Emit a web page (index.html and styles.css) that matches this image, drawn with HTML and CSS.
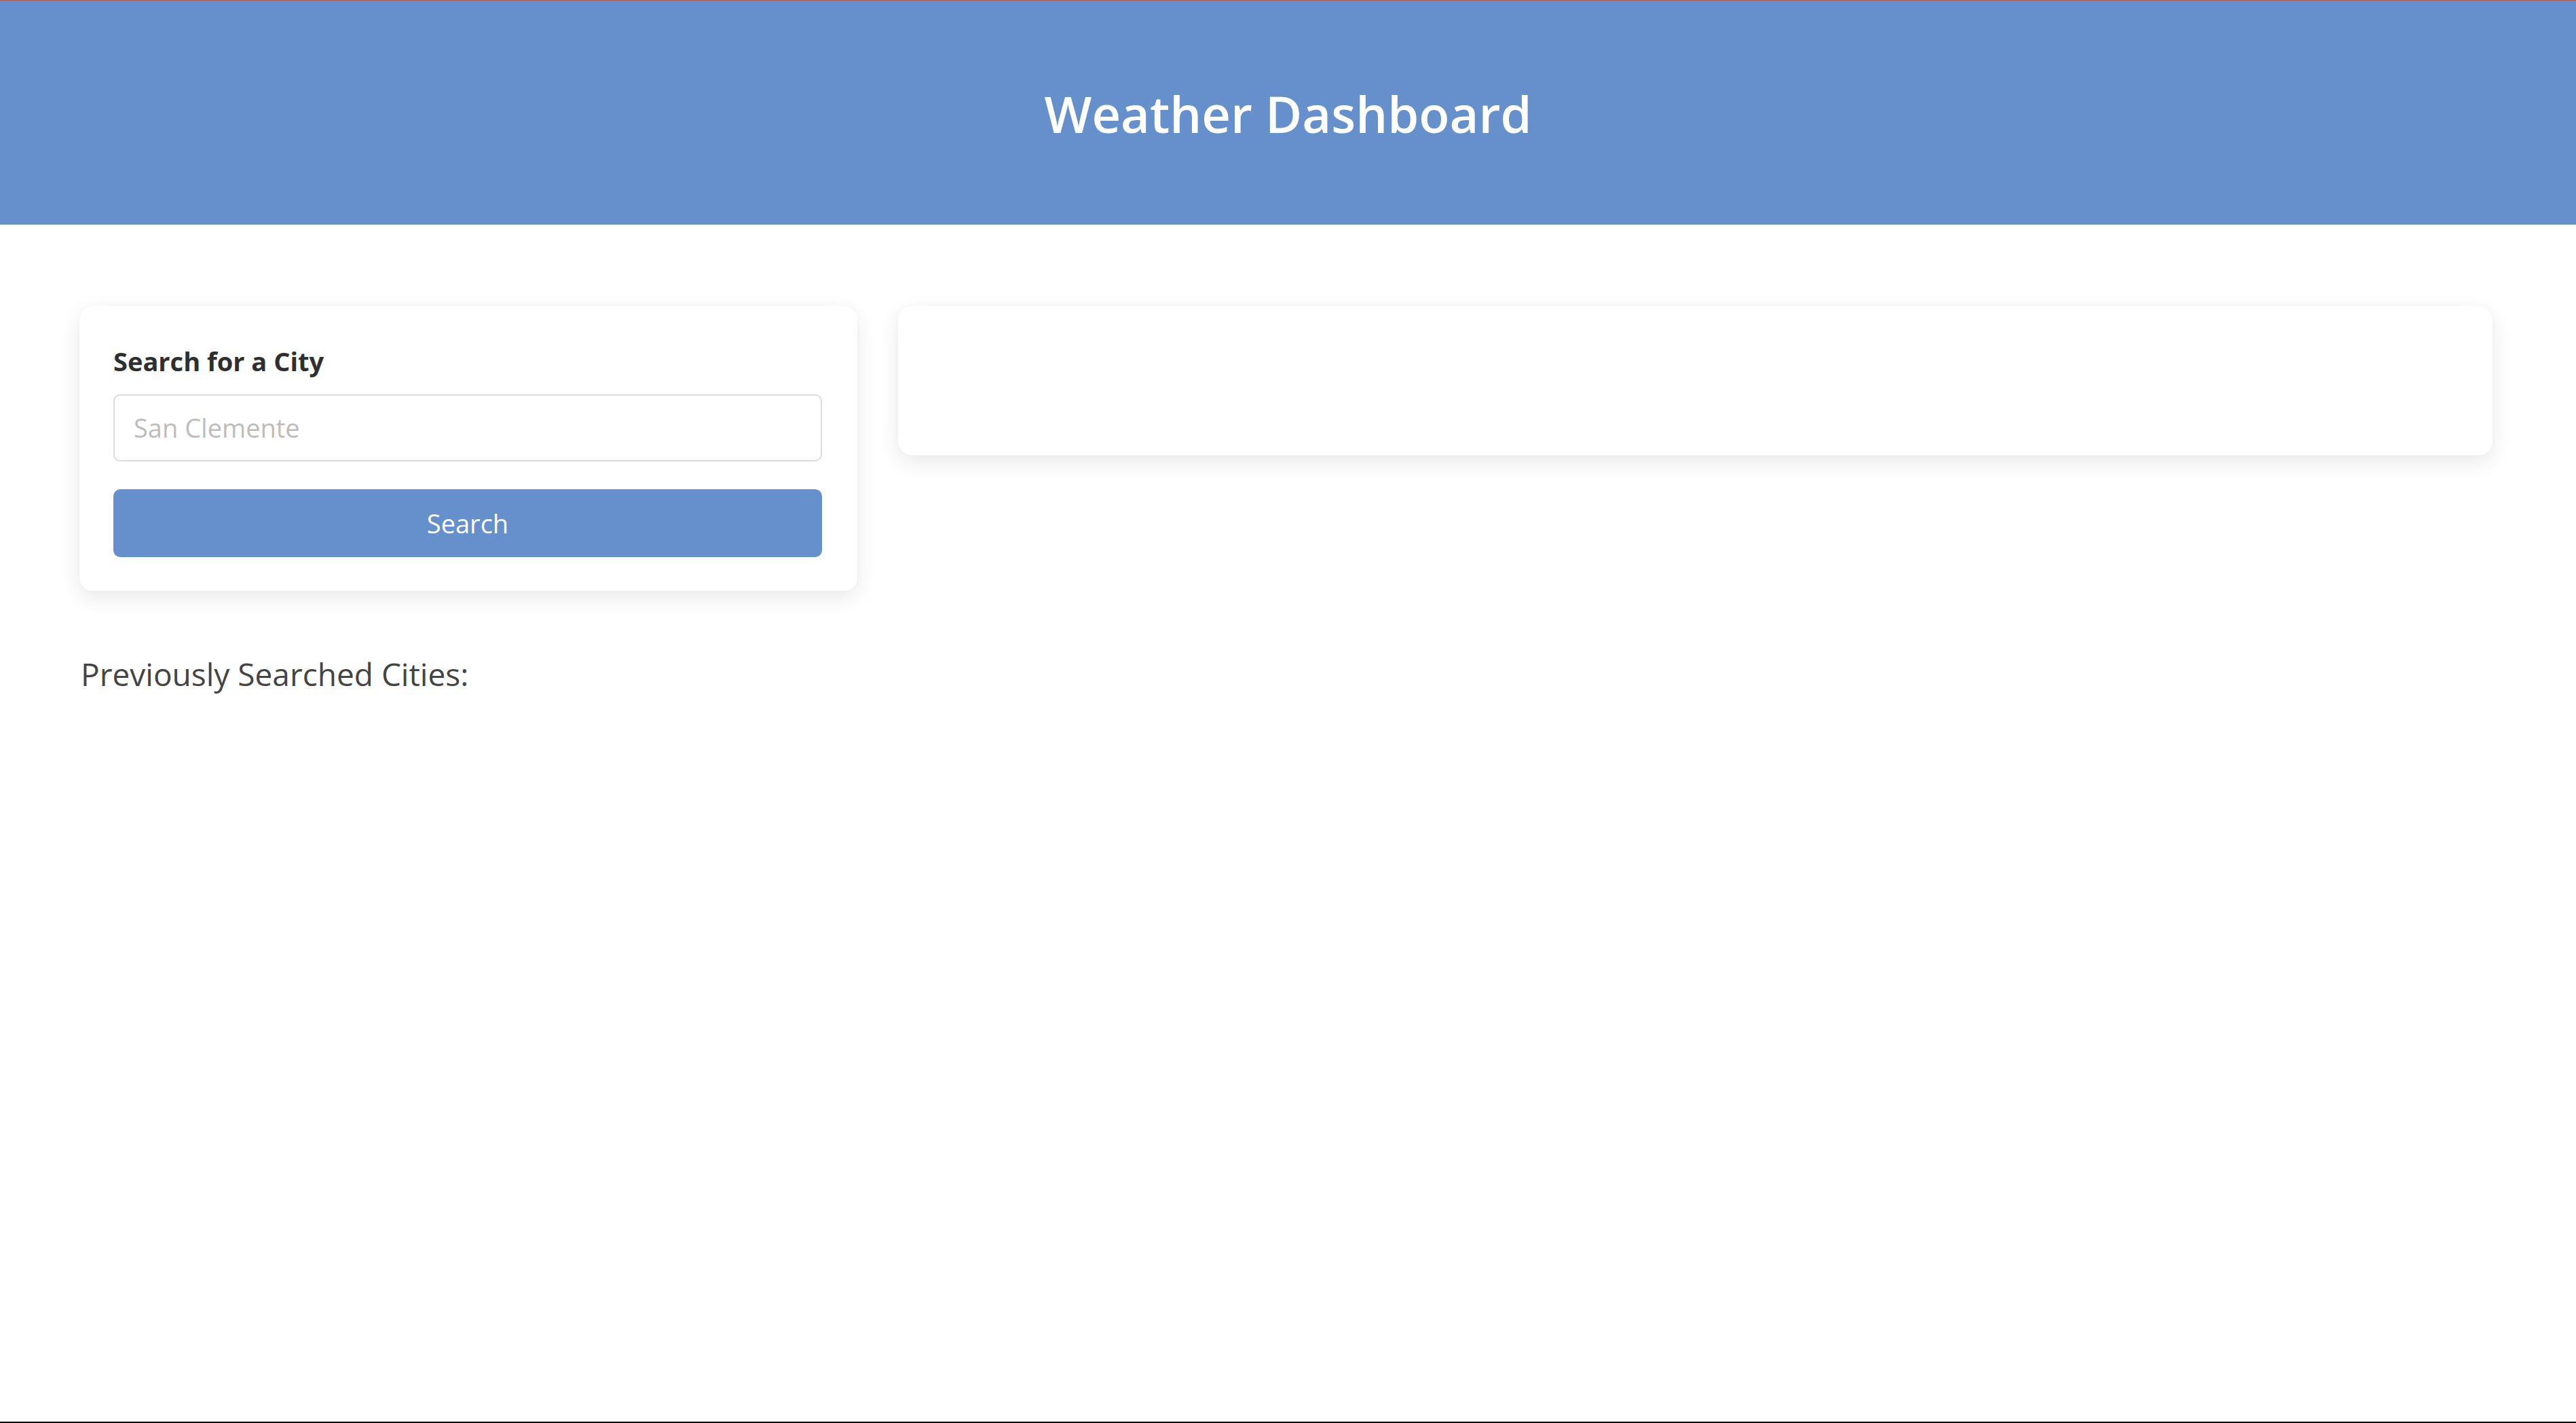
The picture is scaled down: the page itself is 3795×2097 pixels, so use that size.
FILE: index.html
```html
<!DOCTYPE html>
<html lang="en">
<head>
<meta charset="utf-8">
<title>Weather Dashboard</title>
<link rel="stylesheet" href="styles.css">
</head>
<body>
<header class="site-header">
  <h1 class="site-title">Weather Dashboard</h1>
</header>
<main class="layout">
  <section class="sidebar">
    <div class="card search-card">
      <h2 class="search-title">Search for a City</h2>
      <input class="search-input" type="text" placeholder="San Clemente">
      <button class="search-button" type="button">Search</button>
    </div>
    <p class="history-title">Previously Searched Cities:</p>
  </section>
  <section class="card weather-card"></section>
</main>
</body>
</html>
```

FILE: styles.css
```css
* { box-sizing: border-box; }

html, body { margin: 0; padding: 0; }

body {
  min-height: 100vh;
  font-family: "Open Sans", "Noto Sans", sans-serif;
  background: #ffffff;
  color: #333333;
  border-bottom: 2px solid #000000;
}

.site-header {
  height: 331px;
  background: #6590cc;
  border-top: 1px solid #b4595c;
  display: flex;
  align-items: center;
  justify-content: center;
}

.site-title {
  margin: 0;
  color: #ffffff;
  font-size: 74px;
  font-weight: 600;
  line-height: 1.2;
  padding-top: 4px;
}

.layout {
  display: grid;
  grid-template-columns: 1146px 1fr;
  column-gap: 60px;
  align-items: start;
  padding: 120px 123px 0 117px;
}

.card {
  background: #ffffff;
  border-radius: 20px;
  box-shadow: 0 10px 32px rgba(0, 0, 0, 0.09), 0 0 4px rgba(0, 0, 0, 0.03);
}

.search-card {
  display: flex;
  flex-direction: column;
  padding: 58px 52px 50px 50px;
}

.search-title {
  margin: 0 0 24px 0;
  font-size: 38px;
  font-weight: 700;
  line-height: 1.25;
  color: #2f2f2f;
}

.search-input {
  height: 99px;
  width: 100%;
  border: 2px solid #dcdcdc;
  border-radius: 10px;
  padding: 0 28px;
  font-family: inherit;
  font-size: 38px;
  color: #333;
  outline: none;
  background: #fff;
}

.search-input::placeholder { color: #bdbdbd; }

.search-button {
  margin-top: 41px;
  height: 100px;
  width: 100%;
  border: none;
  border-radius: 10px;
  background: #6590cc;
  color: #ffffff;
  font-family: inherit;
  font-size: 38px;
  font-weight: 400;
  cursor: pointer;
}

.history-title {
  margin: 88px 0 0 2px;
  font-size: 46px;
  line-height: 1.5;
  color: #444444;
}

.weather-card {
  min-height: 220px;
}
```
